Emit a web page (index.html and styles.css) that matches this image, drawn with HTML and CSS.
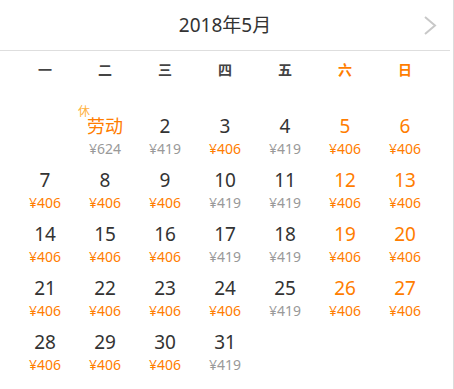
FILE: index.html
```html
<!DOCTYPE html>
<html lang="zh-CN">
<head>
<meta charset="utf-8">
<title>2018年5月</title>
<link rel="stylesheet" href="styles.css">
</head>
<body>
<div class="calendar">
  <div class="header">
    <div class="title">2018年5月</div>
    <svg class="next" width="14" height="20" viewBox="0 0 14 20"><polyline points="2,1 12,9.5 2,18" fill="none" stroke="#c8c8c8" stroke-width="2"/></svg>
  </div>
  <div class="weekdays">
    <div>一</div><div>二</div><div>三</div><div>四</div><div>五</div><div class="we">六</div><div class="we">日</div>
  </div>
  <div class="days">
    <div class="cell"></div>
    <div class="cell hol"><span class="rest">休</span><div class="num">劳动</div><div class="price">¥624</div></div>
    <div class="cell"><div class="num">2</div><div class="price">¥419</div></div>
    <div class="cell"><div class="num">3</div><div class="price low">¥406</div></div>
    <div class="cell"><div class="num">4</div><div class="price">¥419</div></div>
    <div class="cell we"><div class="num">5</div><div class="price low">¥406</div></div>
    <div class="cell we"><div class="num">6</div><div class="price low">¥406</div></div>

    <div class="cell"><div class="num">7</div><div class="price low">¥406</div></div>
    <div class="cell"><div class="num">8</div><div class="price low">¥406</div></div>
    <div class="cell"><div class="num">9</div><div class="price low">¥406</div></div>
    <div class="cell"><div class="num">10</div><div class="price">¥419</div></div>
    <div class="cell"><div class="num">11</div><div class="price">¥419</div></div>
    <div class="cell we"><div class="num">12</div><div class="price low">¥406</div></div>
    <div class="cell we"><div class="num">13</div><div class="price low">¥406</div></div>

    <div class="cell"><div class="num">14</div><div class="price low">¥406</div></div>
    <div class="cell"><div class="num">15</div><div class="price low">¥406</div></div>
    <div class="cell"><div class="num">16</div><div class="price low">¥406</div></div>
    <div class="cell"><div class="num">17</div><div class="price">¥419</div></div>
    <div class="cell"><div class="num">18</div><div class="price">¥419</div></div>
    <div class="cell we"><div class="num">19</div><div class="price low">¥406</div></div>
    <div class="cell we"><div class="num">20</div><div class="price low">¥406</div></div>

    <div class="cell"><div class="num">21</div><div class="price low">¥406</div></div>
    <div class="cell"><div class="num">22</div><div class="price low">¥406</div></div>
    <div class="cell"><div class="num">23</div><div class="price low">¥406</div></div>
    <div class="cell"><div class="num">24</div><div class="price low">¥406</div></div>
    <div class="cell"><div class="num">25</div><div class="price">¥419</div></div>
    <div class="cell we"><div class="num">26</div><div class="price low">¥406</div></div>
    <div class="cell we"><div class="num">27</div><div class="price low">¥406</div></div>

    <div class="cell"><div class="num">28</div><div class="price low">¥406</div></div>
    <div class="cell"><div class="num">29</div><div class="price low">¥406</div></div>
    <div class="cell"><div class="num">30</div><div class="price low">¥406</div></div>
    <div class="cell"><div class="num">31</div><div class="price">¥419</div></div>
  </div>
</div>
</body>
</html>
```
FILE: styles.css
```css
html, body {
  margin: 0;
  padding: 0;
  background: #fff;
}
body {
  font-family: "Noto Sans", "Noto Sans CJK SC", sans-serif;
  color: #333;
}
.calendar {
  width: 453px;
  height: 389px;
  border-right: 1px solid #dcdcdc;
}
.header {
  position: relative;
  height: 50px;
  margin-right: 3px;
  border-bottom: 1px solid #dedede;
  display: flex;
  justify-content: center;
  align-items: center;
}
.title {
  font-size: 19px;
  line-height: 48px;
  color: #333;
}
.next {
  position: absolute;
  right: 13px;
  top: 16px;
}
.weekdays {
  display: grid;
  grid-template-columns: repeat(7, 60px);
  padding: 8px 15px 0;
  margin-bottom: 29px;
  font-family: "Noto Sans CJK SC", sans-serif;
  font-size: 14px;
  line-height: 20px;
  font-weight: bold;
  text-align: center;
  color: #444;
}
.weekdays .we {
  color: #ff7d00;
}
.days {
  display: grid;
  grid-template-columns: repeat(7, 60px);
  grid-auto-rows: 54px;
  padding: 0 15px;
}
.cell {
  position: relative;
  padding-top: 7px;
  text-align: center;
}
.num {
  font-size: 19px;
  line-height: 23px;
  color: #333;
}
.price {
  padding-top: 1px;
  font-size: 14px;
  line-height: 20px;
  color: #999;
}
.price.low {
  color: #ff7d00;
}
.cell.we .num {
  color: #ff7d00;
}
.cell.hol .num {
  font-size: 18px;
  color: #ff7d00;
}
.rest {
  position: absolute;
  left: 3px;
  top: -5px;
  font-family: "Noto Sans CJK SC", sans-serif;
  font-size: 12px;
  line-height: 16px;
  color: #ffb13d;
}
```
